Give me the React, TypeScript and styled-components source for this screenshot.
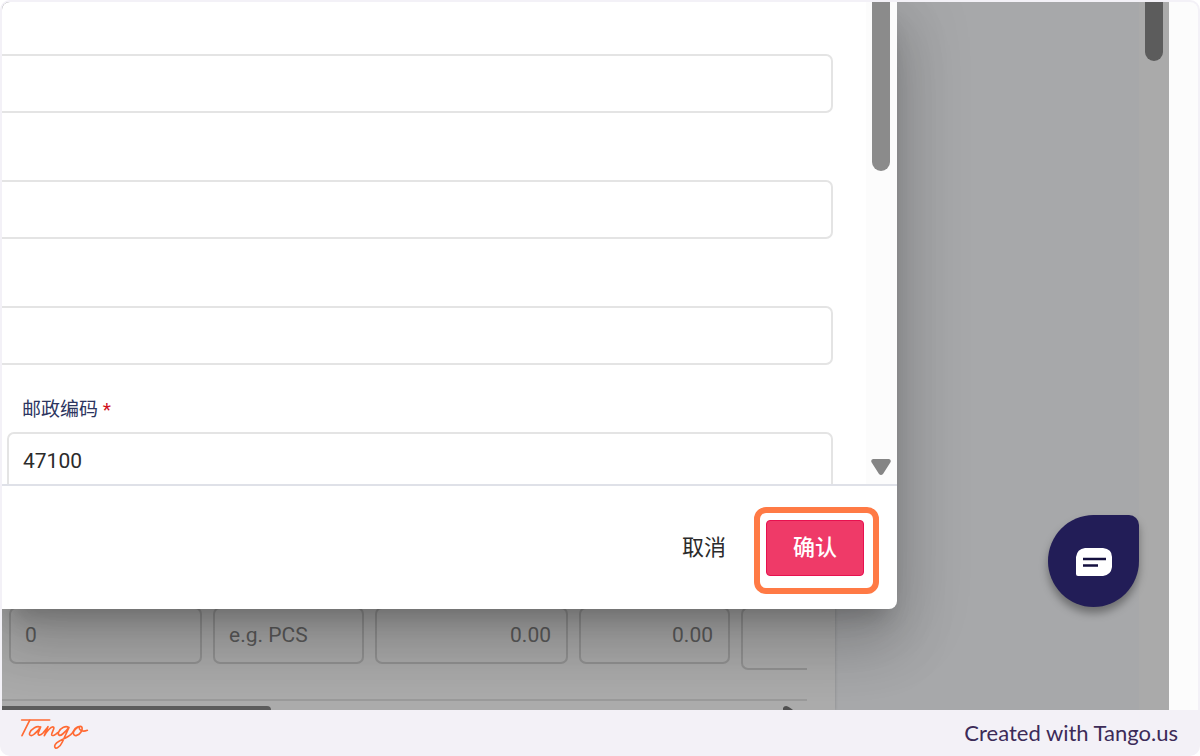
import React from "react";
import styled, { createGlobalStyle } from "styled-components";

const GlobalStyle = createGlobalStyle`
  *, *::before, *::after { box-sizing: border-box; }
  html, body, #root { height: 100%; margin: 0; }
  body { background: #fff; font-family: Roboto, "Noto Sans CJK SC", sans-serif; }
  input, button { font: inherit; margin: 0; }
`;

const Frame = styled.div`
  display: flex;
  flex-direction: column;
  min-height: 100%;
  padding: 2px 2px 0;
  border-radius: 10px;
  overflow: hidden;
  background: #f3f1f7;
`;

const Screen = styled.div`
  display: flex;
  flex: 1;
  border-radius: 8px 8px 0 0;
  overflow: hidden;
  background: #fcfcfc;
`;

const Main = styled.main`
  position: relative;
  display: flex;
  flex: 1;
  background: #a7a8aa;
`;

const PageScrollTrack = styled.div`
  width: 30px;
  padding: 0 6px;
  background: #aaa;
`;

const Margin = styled.div`
  width: 29px;
`;

const Thumb = styled.div<{ $length: number; $color: string }>`
  width: 18px;
  height: ${(p) => p.$length}px;
  border-radius: 0 0 9px 9px;
  background: ${(p) => p.$color};
`;

const Panel = styled.section`
  display: flex;
  flex-direction: column;
  justify-content: flex-end;
  width: calc(100% - 304px);
  padding-right: 28px;
  background: #ababab;
  box-shadow: 0 0 3px rgba(0, 0, 0, 0.2);
`;

const ItemRow = styled.div`
  display: flex;
  align-items: flex-start;
  gap: 11px;
  padding: 0 0 29px 7px;
  border-bottom: 2px solid #9a9a9a;
`;

const ItemInput = styled.input<{ $width: number; $numeric?: boolean }>`
  width: ${(p) => p.$width}px;
  height: 57px;
  padding: 0 15px 2px 14px;
  border: 2px solid #929292;
  border-radius: 7px;
  background: transparent;
  color: #5c5c5c;
  font-size: 21px;
  text-align: ${(p) => (p.$numeric ? "right" : "left")};
  &::placeholder { color: #5c5c5c; opacity: 1; }
`;

const ClippedInput = styled.input`
  flex: 1;
  min-width: 0;
  height: 63px;
  border: 2px solid #929292;
  border-right: 0;
  border-radius: 7px 0 0 7px;
  background: transparent;
`;

const RowScroll = styled.div`
  display: flex;
  justify-content: space-between;
  align-items: flex-end;
  height: 9px;
  padding-right: 14px;
`;

const RowThumb = styled.div`
  width: 34%;
  height: 4px;
  border-radius: 0 5px 0 0;
  background: #5c5c5c;
`;

const Dialog = styled.div`
  position: absolute;
  top: 0;
  left: 0;
  display: flex;
  flex-direction: column;
  width: calc(100% - 242px);
  height: calc(100% - 101px);
  border-radius: 0 0 8px 0;
  background: #fff;
  box-shadow:
    0 16px 22px -10px rgba(0, 0, 0, 0.2),
    0 36px 57px 4px rgba(0, 0, 0, 0.14),
    0 14px 70px 12px rgba(0, 0, 0, 0.12);
`;

const DialogBody = styled.div`
  display: flex;
  flex: 1;
  min-height: 0;
  overflow: hidden;
`;

const Form = styled.form`
  display: flex;
  flex-direction: column;
  flex: 1;
  gap: 67px;
  padding: 52px 33px 0 0;
`;

const WideInput = styled.input`
  flex: none;
  width: 100%;
  height: 59px;
  padding: 0 15px;
  border: 2px solid #e4e4e4;
  border-left: 0;
  border-radius: 0 7px 7px 0;
  background: #fff;
  font-size: 21px;
`;

const Field = styled.div`
  display: flex;
  flex-direction: column;
  gap: 9px;
  margin-top: -35px;
  padding-left: 5px;
`;

const FieldLabel = styled.label`
  padding-left: 15px;
  color: #2c3560;
  font-size: 19px;
  line-height: 26px;
`;

const Required = styled.span`
  color: #d0101c;
`;

const FieldInput = styled.input`
  height: 59px;
  padding: 0 14px 2px;
  border: 2px solid #e4e4e4;
  border-radius: 7px;
  background: #fff;
  color: #2b2b2b;
  font-size: 21px;
`;

const DialogScroll = styled.div`
  display: flex;
  flex-direction: column;
  justify-content: space-between;
  align-items: center;
  width: 31px;
  padding: 0 1px 8px 0;
  background: #fcfcfc;
`;

const DialogFooter = styled.footer`
  display: flex;
  justify-content: flex-end;
  align-items: center;
  gap: 16px;
  height: 125px;
  padding: 0 33px;
  border-top: 2px solid #dfe1e8;
`;

const CancelButton = styled.button`
  height: 56px;
  padding: 0 24px 6px;
  border: 0;
  background: transparent;
  color: #2b2b2b;
  font-size: 22px;
`;

const Highlight = styled.div`
  position: relative;
  &::after {
    content: "";
    position: absolute;
    inset: -13px -15px -18px -12px;
    border: 6px solid #ff7a45;
    border-radius: 12px;
    pointer-events: none;
  }
`;

const ConfirmButton = styled.button`
  display: block;
  width: 98px;
  height: 56px;
  padding: 0 0 6px;
  border: 1px solid #e8104f;
  border-radius: 4px;
  background: #ef3a68;
  color: #fff;
  font-size: 22px;
  font-weight: 500;
`;

const ChatButton = styled.button`
  position: absolute;
  right: 0;
  bottom: 103px;
  display: flex;
  justify-content: center;
  align-items: center;
  width: 91px;
  height: 92px;
  padding: 2px 0 0;
  border: 0;
  border-radius: 50% 10px 50% 50%;
  background: #221d57;
  box-shadow: 0 6px 8px rgba(0, 0, 0, 0.35);
`;

const Caption = styled.footer`
  display: flex;
  justify-content: space-between;
  align-items: center;
  height: 46px;
  padding: 0 20px 2px 14px;
  color: #3c2b58;
  font-family: Lato, sans-serif;
  font-size: 22px;
`;

const LogoLink = styled.a`
  display: flex;
`;

const CreditLink = styled.a`
  color: inherit;
  text-decoration: none;
`;

function TangoLogo() {
  return (
    <svg width="76" height="40" viewBox="0 0 228 120" fill="none" stroke="#ff6a33" strokeWidth="5" strokeLinecap="round" strokeLinejoin="round" role="img" aria-label="Tango">
      <path d="M17 24H101" />
      <path d="M41 25L18 71" />
      <path d="M73 46C64 39 46 50 41 63C38 72 48 73 55 66C64 59 70 51 74 45L67 62C64 72 74 71 81 63C89 53 93 48 96 44L85 71C92 58 105 43 112 45C118 47 106 62 107 68C109 74 119 68 125 62" />
      <path d="M158 47C150 39 134 48 128 60C124 70 132 73 140 66C149 59 155 52 159 46L139 90C131 108 116 114 116 102C117 88 148 82 164 68C172 60 176 52 184 47" />
      <path d="M192 43C181 43 171 54 172 64C174 76 189 70 195 60C201 50 199 42 192 43C185 48 194 63 214 55" />
    </svg>
  );
}

function ChatIcon() {
  return (
    <svg width="36" height="28" viewBox="0 0 36 28" aria-hidden="true">
      <path fill="#fff" d="M9 0H27Q36 1 36 9V19Q35 27 27 28H2Q0 28 0 26V9Q1 1 9 0Z" />
      <path stroke="#14103f" strokeWidth="2.5" d="M7 11H30M7 17.5H22" />
    </svg>
  );
}

export default function App() {
  return (
    <>
      <GlobalStyle />
      <Frame>
        <Screen>
          <Main>
            <Panel>
              <ItemRow>
                <ItemInput $width={193} placeholder="0" aria-label="数量" />
                <ItemInput $width={151} placeholder="e.g. PCS" aria-label="单位" />
                <ItemInput $width={193} $numeric placeholder="0.00" aria-label="单价" />
                <ItemInput $width={151} $numeric placeholder="0.00" aria-label="金额" />
                <ClippedInput aria-label="税" />
              </ItemRow>
              <RowScroll>
                <RowThumb />
                <svg width="11" height="4" viewBox="0 0 11 4" aria-hidden="true">
                  <path fill="#505050" d="M1 4V2Q2 0 4 0Q6 0 11 4Z" />
                </svg>
              </RowScroll>
            </Panel>
            <ChatButton aria-label="聊天">
              <ChatIcon />
            </ChatButton>
            <Dialog role="dialog" aria-label="编辑地址">
              <DialogBody>
                <Form>
                  <WideInput aria-label="地址 1" />
                  <WideInput aria-label="地址 2" />
                  <WideInput aria-label="地址 3" />
                  <Field>
                    <FieldLabel htmlFor="postcode">
                      邮政编码 <Required>*</Required>
                    </FieldLabel>
                    <FieldInput id="postcode" defaultValue="47100" />
                  </Field>
                </Form>
                <DialogScroll>
                  <Thumb $length={169} $color="#8b8b8b" />
                  <svg width="20" height="17" viewBox="0 0 20 17" aria-hidden="true">
                    <path fill="#858585" d="M2 0H18Q21 1 19 4L12 15Q10 17 8 15L1 4Q-1 1 2 0Z" />
                  </svg>
                </DialogScroll>
              </DialogBody>
              <DialogFooter>
                <CancelButton type="button">取消</CancelButton>
                <Highlight>
                  <ConfirmButton type="button">确认</ConfirmButton>
                </Highlight>
              </DialogFooter>
            </Dialog>
          </Main>
          <PageScrollTrack>
            <Thumb $length={59} $color="#5c5c5c" />
          </PageScrollTrack>
          <Margin />
        </Screen>
        <Caption>
          <LogoLink href="#tango">
            <TangoLogo />
          </LogoLink>
          <CreditLink href="#tango">Created with Tango.us</CreditLink>
        </Caption>
      </Frame>
    </>
  );
}
